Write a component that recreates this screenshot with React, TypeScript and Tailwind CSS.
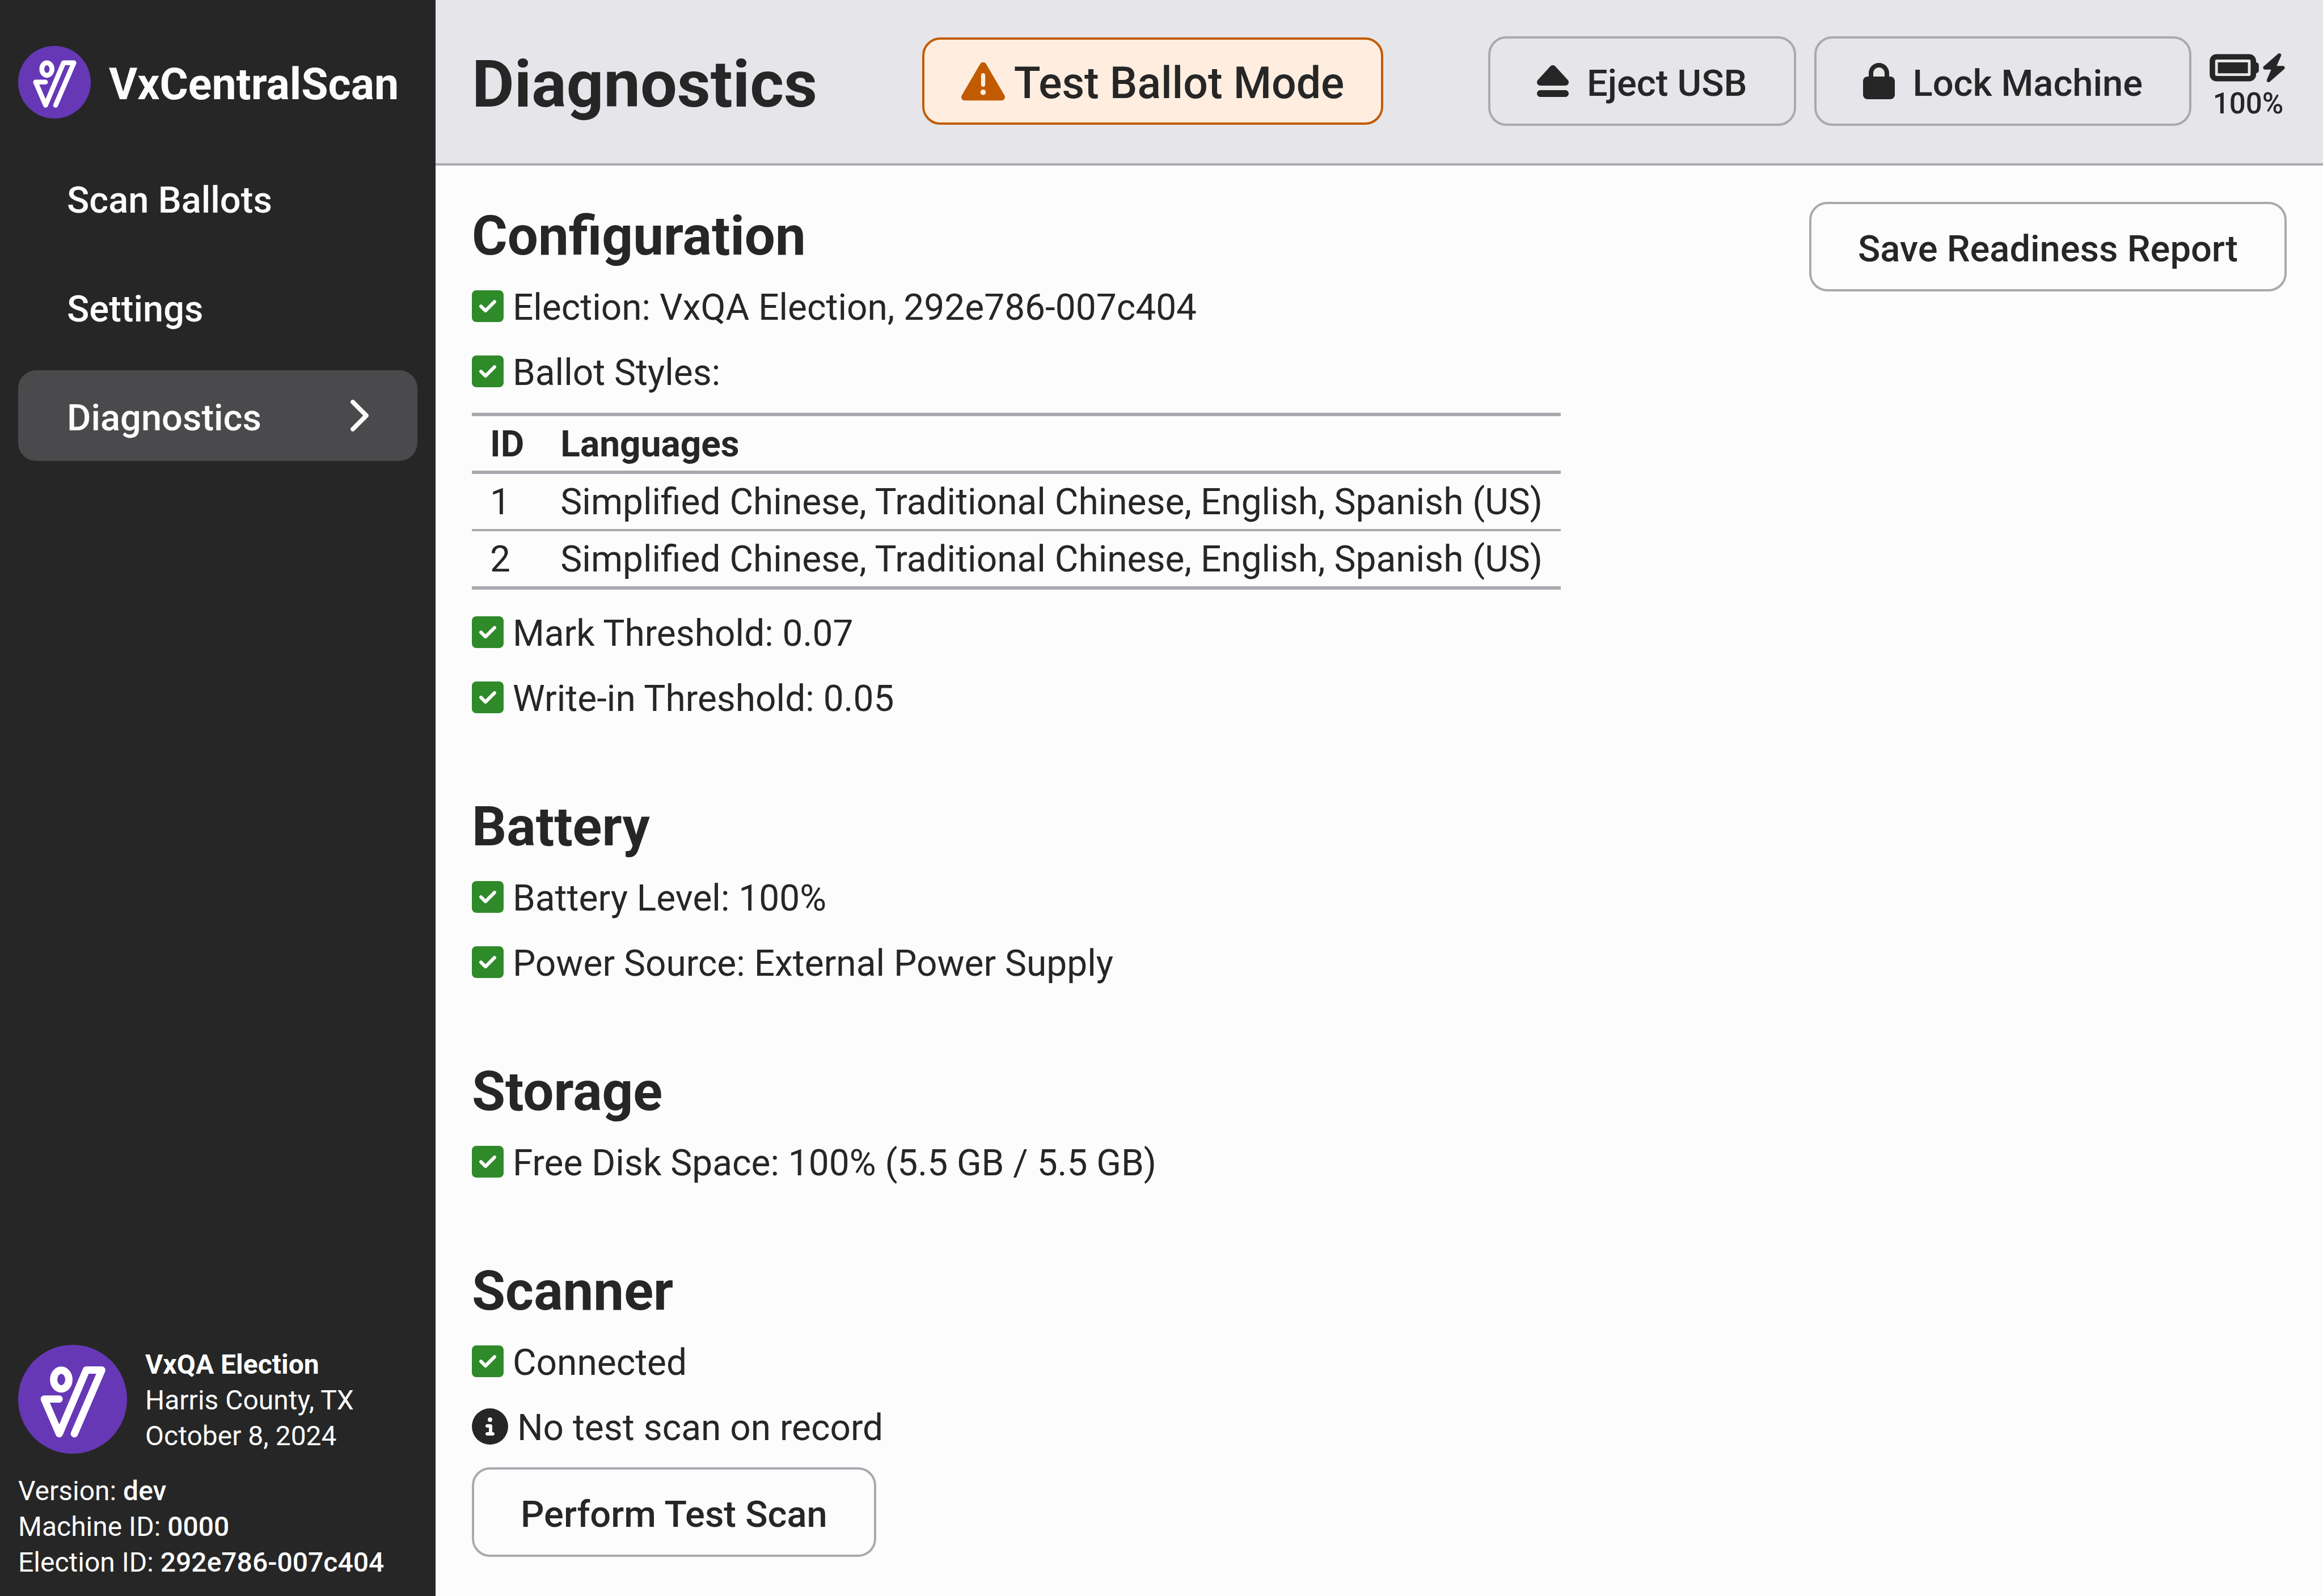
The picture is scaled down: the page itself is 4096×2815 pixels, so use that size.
import type { ReactNode } from "react";
import {
  FaBatteryFull,
  FaBolt,
  FaChevronRight,
  FaCircleInfo,
  FaEject,
  FaLock,
  FaSquareCheck,
  FaTriangleExclamation,
} from "react-icons/fa6";

function Logo({ className }: { className: string }) {
  return (
    <svg viewBox="0 0 100 100" className={className} role="img" aria-label="VotingWorks">
      <circle cx="50" cy="50" r="50" fill="#6638b6" />
      <g fill="none" stroke="#fff" strokeWidth="6.7" strokeLinecap="round" strokeLinejoin="round">
        <ellipse cx="39.6" cy="31.9" rx="7" ry="8.6" />
        <path d="M37.6 49.8H24L37.8 81.7 62.6 23.2H76.8L51.6 81.7" />
      </g>
    </svg>
  );
}

function NavItem({ children, active = false }: { children: ReactNode; active?: boolean }) {
  return (
    <li>
      <a
        href="#"
        aria-current={active ? "page" : undefined}
        className={
          active
            ? "flex h-40 items-center justify-between rounded-[32px] bg-[#4a4a4c] px-[86px] text-[65px] font-medium"
            : "flex h-40 items-center justify-between rounded-[32px] px-[86px] text-[65px] font-medium"
        }
      >
        <span className="pt-2">{children}</span>
        {active && <FaChevronRight className="h-16 w-10" />}
      </a>
    </li>
  );
}

function Button({ children, icon }: { children: ReactNode; icon?: ReactNode }) {
  return (
    <button
      type="button"
      className="flex shrink-0 items-center justify-center gap-8 rounded-[32px] border-4 border-[#aaa9af] px-[82px] py-[31px] text-[65px] font-medium whitespace-nowrap"
    >
      {icon}
      <span className="pt-2 leading-[80px]">{children}</span>
    </button>
  );
}

function Check({ children }: { children: ReactNode }) {
  return (
    <p className="mb-8">
      <FaSquareCheck className="inline h-16 w-14 align-[-8px] text-[#2f8a2a]" /> {children}
    </p>
  );
}

function Section({ title, children }: { title: string; children: ReactNode }) {
  return (
    <section className="mb-[124px] last:mb-0">
      <h2 className="mb-[25px] text-[96px] leading-[120px] font-bold">{title}</h2>
      {children}
    </section>
  );
}

const ballotStyles = [
  { id: "1", languages: "Simplified Chinese, Traditional Chinese, English, Spanish (US)" },
  { id: "2", languages: "Simplified Chinese, Traditional Chinese, English, Spanish (US)" },
];

export default function App() {
  return (
    <div className="flex min-h-screen bg-[#fcfcfc] font-['Roboto',sans-serif] text-[64px] leading-[83px] text-[#262626]">
      <aside className="flex w-[768px] shrink-0 flex-col bg-[#262626] text-[#fcfcfc]">
        <div className="flex items-center gap-8 px-8 pt-[81px] pb-[60px]">
          <Logo className="size-32 shrink-0" />
          <span className="pt-2 text-[77px] leading-[96px] font-bold">VxCentralScan</span>
        </div>
        <nav>
          <ul className="flex flex-col gap-8 px-8">
            <NavItem>Scan Ballots</NavItem>
            <NavItem>Settings</NavItem>
            <NavItem active>Diagnostics</NavItem>
          </ul>
        </nav>
        <div className="mt-auto px-8 pb-7 text-[48px] leading-[63px]">
          <div className="mb-[34px] flex items-center gap-8">
            <Logo className="size-48 shrink-0" />
            <div className="pt-1">
              <div className="font-bold">VxQA Election</div>
              <div>Harris County, TX</div>
              <div>October 8, 2024</div>
            </div>
          </div>
          <div>
            Version: <span className="font-medium">dev</span>
          </div>
          <div>
            Machine ID: <span className="font-medium">0000</span>
          </div>
          <div>
            Election ID: <span className="font-medium">292e786-007c404</span>
          </div>
        </div>
      </aside>

      <div className="flex min-w-0 flex-1 flex-col">
        <header className="flex h-[292px] items-center justify-between border-b-4 border-[#aaa9af] bg-[#e6e5ea] px-16 pb-0.5">
          <h1 className="pt-3 text-[115px] leading-[144px] font-bold">Diagnostics</h1>
          <div className="flex items-center gap-4 rounded-[32px] border-4 border-[#c25b00] bg-[#ffeee0] px-[65px] py-[21px] text-[77px] leading-[96px] font-medium">
            <FaTriangleExclamation className="size-[77px] text-[#c25b00]" />
            <span className="pt-2">Test Ballot Mode</span>
          </div>
          <div className="flex items-center gap-8">
            <Button icon={<FaEject className="h-16 w-14" />}>Eject USB</Button>
            <Button icon={<FaLock className="h-16 w-14" />}>Lock Machine</Button>
            <div className="flex flex-col items-center pt-3 text-[51px] leading-[60px] font-medium">
              <div className="flex h-[67px] items-center gap-1">
                <FaBatteryFull className="h-[77px] w-[87px]" />
                <FaBolt className="h-[51px] w-[45px]" />
              </div>
              <span>100%</span>
            </div>
          </div>
        </header>

        <main className="flex flex-1 items-start justify-between px-16 pt-16">
          <div>
            <Section title="Configuration">
              <Check>Election: VxQA Election, 292e786-007c404</Check>
              <Check>Ballot Styles:</Check>
              <table className="-mt-[3px] mb-9 border-collapse border-y-[6px] border-[#aaa9af] leading-[84px]">
                <thead>
                  <tr className="border-b-[6px] border-[#aaa9af] text-left">
                    <th className="px-8 pt-2 pb-1 font-bold">ID</th>
                    <th className="px-8 pt-2 pb-1 font-bold">Languages</th>
                  </tr>
                </thead>
                <tbody>
                  {ballotStyles.map((style) => (
                    <tr key={style.id} className="border-b-4 border-[#aaa9af] last:border-b-[6px]">
                      <td className="px-8 pt-2 pb-[5px]">{style.id}</td>
                      <td className="px-8 pt-2 pb-[5px]">{style.languages}</td>
                    </tr>
                  ))}
                </tbody>
              </table>
              <Check>Mark Threshold: 0.07</Check>
              <Check>Write-in Threshold: 0.05</Check>
            </Section>
            <Section title="Battery">
              <Check>Battery Level: 100%</Check>
              <Check>Power Source: External Power Supply</Check>
            </Section>
            <Section title="Storage">
              <Check>Free Disk Space: 100% (5.5 GB / 5.5 GB)</Check>
            </Section>
            <Section title="Scanner">
              <Check>Connected</Check>
              <p className="mb-7">
                <FaCircleInfo className="inline size-16 align-[-8px]" /> No test scan on record
              </p>
              <Button>Perform Test Scan</Button>
            </Section>
          </div>
          <Button>Save Readiness Report</Button>
        </main>
      </div>
    </div>
  );
}
